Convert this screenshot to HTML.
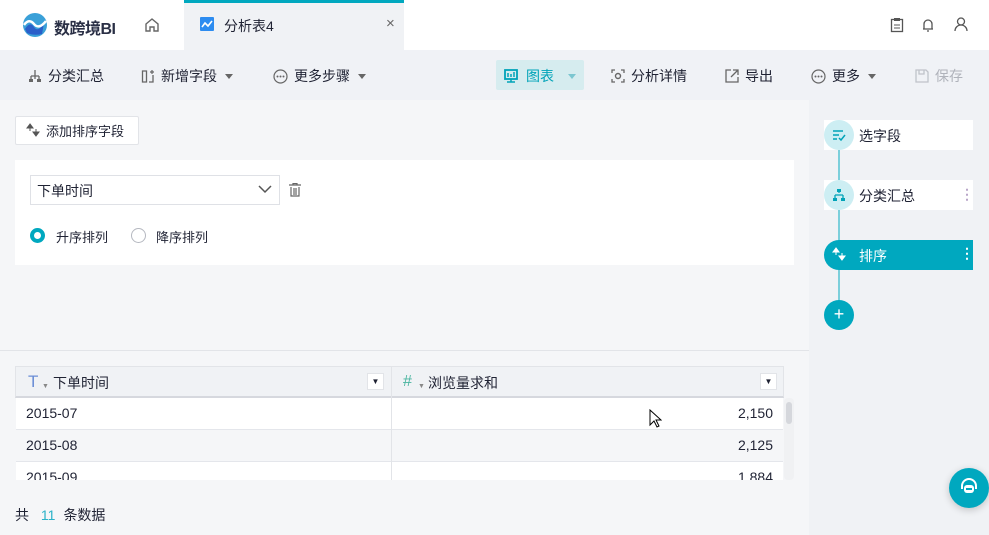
<!DOCTYPE html>
<html><head><meta charset="utf-8"><style>
*{box-sizing:border-box;margin:0;padding:0}
body{width:989px;height:535px;overflow:hidden;font-family:"Liberation Sans","Noto Sans CJK SC",sans-serif;font-size:14px;color:#1f2233;background:#f5f6f8;position:relative}
.abs{position:absolute}
.top{left:0;top:0;width:989px;height:50px;background:#fff}
.tab{left:184px;top:0;width:220px;height:50px;background:#f0f2f5;border-top:3px solid #00a8bf}
.tb{left:0;top:50px;width:989px;height:50px;background:#f0f2f6}
.ti{position:absolute;top:66px;display:flex;align-items:center;gap:6px;font-size:14px}
.car{width:0;height:0;border-left:4px solid transparent;border-right:4px solid transparent;border-top:5px solid #666;margin-left:2px}
.right{left:809px;top:100px;width:180px;height:435px;background:#f0f2f5}
.row{position:absolute;left:16px;width:767px;height:32px;border-bottom:1px solid #e4e6eb;background:#fff;font-size:14px}
.row span{position:absolute;top:7px}
</style></head><body>
<div class="abs top"></div>
<svg class="abs" style="left:22px;top:12px" width="26" height="26" viewBox="0 0 26 26"><circle cx="13" cy="13" r="12" fill="#3aa0d8"/><path d="M3 17 Q8 9 12 15 T22 11 L20 22 Q12 24 5 21Z" fill="#2a5fc9"/><path d="M2 13 Q7 6 12 12 T24 9" stroke="#fff" stroke-width="2.5" fill="none"/></svg>
<div class="abs" style="left:54px;top:15px;font-size:16px;font-weight:bold;color:#2a2f45;letter-spacing:-0.5px">数跨境BI</div>
<svg class="abs" style="left:144px;top:17px" width="16" height="16" viewBox="0 0 16 16"><path d="M2 7 L8 2 L14 7 V14 H10 V10 H6 V14 H2Z" fill="none" stroke="#666" stroke-width="1.4"/></svg>
<div class="abs tab"></div>
<svg class="abs" style="left:200px;top:17px" width="14" height="14"><rect width="14" height="14" fill="#2d8cf0" rx="1"/><path d="M2 10 L5 6 L8 9 L12 4" stroke="#fff" stroke-width="1.6" fill="none"/></svg>
<div class="abs" style="left:224px;top:16px;font-size:14px">分析表4</div>
<div class="abs" style="left:386px;top:15px;font-size:15px;color:#666">×</div>
<svg class="abs" style="left:890px;top:17px" width="14" height="16"><rect x="1.5" y="2.5" width="11" height="12" fill="none" stroke="#555" stroke-width="1.3"/><rect x="4" y="1" width="6" height="3" fill="#555"/><path d="M4 8h6M4 11h6" stroke="#555"/></svg>
<svg class="abs" style="left:921px;top:17px" width="14" height="16"><path d="M3 12 V7 a4 4 0 0 1 8 0 V12 H2 H12 M6 14 h2" fill="none" stroke="#555" stroke-width="1.3"/></svg>
<svg class="abs" style="left:953px;top:16px" width="16" height="16"><circle cx="8" cy="5.5" r="3.5" fill="none" stroke="#555" stroke-width="1.3"/><path d="M2 15 a6 6 0 0 1 12 0" fill="none" stroke="#555" stroke-width="1.3"/></svg>

<div class="abs tb"></div>
<div class="ti" style="left:28px"><svg width="14" height="14"><path d="M7 1v4M3 7h8M3 7v3M11 7v3M7 5v5" stroke="#666" stroke-width="1.3" fill="none"/><rect x="1" y="10" width="4" height="3" fill="#666"/><rect x="9" y="10" width="4" height="3" fill="#666"/></svg>分类汇总</div>
<div class="ti" style="left:141px"><svg width="14" height="14"><path d="M1.5 2v11h4V2zM8 13h4V6" stroke="#666" stroke-width="1.3" fill="none"/><path d="M11 1v4M9 3h4" stroke="#666" stroke-width="1.2"/></svg>新增字段<span class="car"></span></div>
<div class="ti" style="left:273px"><svg width="15" height="15"><circle cx="7.5" cy="7.5" r="6.5" fill="none" stroke="#666" stroke-width="1.2"/><circle cx="4.5" cy="7.5" r="1" fill="#666"/><circle cx="7.5" cy="7.5" r="1" fill="#666"/><circle cx="10.5" cy="7.5" r="1" fill="#666"/></svg>更多步骤<span class="car"></span></div>
<div class="abs" style="left:496px;top:60px;width:88px;height:30px;background:#d6ecef;border-radius:2px"></div>
<div class="ti" style="left:504px;color:#00a3b8;gap:8px"><svg width="14" height="14"><rect x="1" y="1" width="12" height="9" fill="none" stroke="#00a3b8" stroke-width="1.8"/><path d="M4 4v4M7 5v3M10 3v5M7 10v3M3 13h8" stroke="#00a3b8" stroke-width="1.5"/></svg>图表<span class="car" style="border-top-color:#7cc6d0;margin-left:6px"></span></div>
<div class="ti" style="left:611px"><svg width="14" height="14"><path d="M1 4V1h3M10 1h3v3M13 10v3h-3M4 13H1v-3" stroke="#666" stroke-width="1.3" fill="none"/><circle cx="7" cy="7" r="2.5" fill="none" stroke="#666" stroke-width="1.4"/></svg>分析详情</div>
<div class="ti" style="left:725px"><svg width="14" height="14"><path d="M6 1H1v12h12V8M8 1h5v5M13 1L6 8" stroke="#666" stroke-width="1.3" fill="none"/></svg>导出</div>
<div class="ti" style="left:811px"><svg width="15" height="15"><circle cx="7.5" cy="7.5" r="6.5" fill="none" stroke="#666" stroke-width="1.2"/><circle cx="4.5" cy="7.5" r="1" fill="#666"/><circle cx="7.5" cy="7.5" r="1" fill="#666"/><circle cx="10.5" cy="7.5" r="1" fill="#666"/></svg>更多<span class="car"></span></div>
<div class="ti" style="left:915px;color:#b0b3bb"><svg width="14" height="14"><path d="M1 1h10l2 2v10H1z M4 1v4h5V1" stroke="#c0c3ca" stroke-width="1.3" fill="none"/></svg>保存</div>

<div class="abs right"></div>
<div class="abs" style="left:838px;top:135px;width:2px;height:180px;background:#7ccfdb"></div>
<div class="abs" style="left:824px;top:120px;width:149px;height:30px;background:#fff"></div>
<div class="abs" style="left:824px;top:120px;width:30px;height:30px;border-radius:50%;background:#cdeef3"></div>
<svg class="abs" style="left:832px;top:128px" width="14" height="14"><path d="M1 3h10M1 7h6M1 11h4M7 10l2 2 4-5" stroke="#00a3b8" stroke-width="1.5" fill="none"/></svg>
<div class="abs" style="left:859px;top:126px">选字段</div>
<div class="abs" style="left:824px;top:180px;width:149px;height:30px;background:#fff"></div>
<div class="abs" style="left:824px;top:180px;width:30px;height:30px;border-radius:50%;background:#cdeef3"></div>
<svg class="abs" style="left:832px;top:188px" width="14" height="14"><path d="M7 1v4M3 7h8M3 7v3M11 7v3" stroke="#00a3b8" stroke-width="1.3" fill="none"/><rect x="5" y="1" width="4" height="3" fill="#00a3b8"/><rect x="1" y="10" width="4" height="3" fill="#00a3b8"/><rect x="9" y="10" width="4" height="3" fill="#00a3b8"/></svg>
<div class="abs" style="left:859px;top:186px">分类汇总</div>
<div class="abs" style="left:960px;top:186px;color:#b9a6c9;font-weight:bold">⋮</div>
<div class="abs" style="left:824px;top:240px;width:149px;height:30px;background:#00a8bf;border-radius:15px 0 0 15px"></div>
<svg class="abs" style="left:832px;top:247px" width="14" height="14"><path d="M4 1l-3 4h6zM4 5v3M10 13l3-4H7zM10 9V6" fill="#fff" stroke="#fff" stroke-width="1"/></svg>
<div class="abs" style="left:859px;top:246px;color:#fff">排序</div>
<div class="abs" style="left:960px;top:245px;color:#fff;font-weight:bold">⋮</div>
<div class="abs" style="left:824px;top:300px;width:30px;height:30px;border-radius:50%;background:#00a8bf;color:#fff;text-align:center;line-height:29px;font-size:18px">+</div>

<div class="abs" style="left:15px;top:116px;width:124px;height:29px;background:#fff;border:1px solid #e2e4e8;border-radius:2px"></div>
<svg class="abs" style="left:26px;top:123px" width="14" height="14"><path d="M4 1l-3 4h6zM4 5v3M10 13l3-4H7zM10 9V6" fill="#555" stroke="#555" stroke-width="1"/></svg>
<div class="abs" style="left:46px;top:121px;font-size:13px">添加排序字段</div>
<div class="abs" style="left:15px;top:160px;width:779px;height:105px;background:#fff"></div>
<div class="abs" style="left:30px;top:175px;width:250px;height:30px;border:1px solid #dfe1e6;background:#fff"></div>
<div class="abs" style="left:37px;top:181px">下单时间</div>
<svg class="abs" style="left:258px;top:185px" width="14" height="9"><path d="M1 1l6 6 6-6" stroke="#555" stroke-width="1.5" fill="none"/></svg>
<svg class="abs" style="left:289px;top:183px" width="12" height="14"><path d="M0 2h12M4 2V0.5h4V2M2 4v9h8V4M5 5v7M7 5v7" stroke="#666" stroke-width="1.2" fill="none"/></svg>
<div class="abs" style="left:30px;top:228px;width:15px;height:15px;border-radius:50%;border:4.5px solid #00a8bf"></div>
<div class="abs" style="left:56px;top:227px;font-size:13px">升序排列</div>
<div class="abs" style="left:131px;top:228px;width:15px;height:15px;border-radius:50%;border:1px solid #b5b8c0"></div>
<div class="abs" style="left:156px;top:227px;font-size:13px">降序排列</div>

<div class="abs" style="left:0;top:350px;width:809px;height:1px;background:#e2e4e8"></div>
<div class="abs" style="left:15px;top:366px;width:769px;height:32px;background:#f0f2f5;border:1px solid #e2e4e8;border-bottom:2px solid #d6d8de"></div>
<div class="abs" style="left:391px;top:366px;width:1px;height:114px;background:#e2e4e8;z-index:2"></div>
<div class="abs" style="left:28px;top:373px;color:#6b8ed6;font-size:17px;line-height:17px">T</div>
<div class="abs" style="left:42px;top:383px;font-size:7px;color:#888">▼</div>
<div class="abs" style="left:53px;top:373px">下单时间</div>
<div class="abs" style="left:367px;top:373px;width:17px;height:17px;background:#fff;border:1px solid #e2e4e8;font-size:8px;text-align:center;line-height:15px">▼</div>
<div class="abs" style="left:403px;top:373px;color:#4ab5a0;font-size:16px;line-height:17px">#</div>
<div class="abs" style="left:418px;top:383px;font-size:7px;color:#888">▼</div>
<div class="abs" style="left:428px;top:373px">浏览量求和</div>
<div class="abs" style="left:760px;top:373px;width:17px;height:17px;background:#fff;border:1px solid #e2e4e8;font-size:8px;text-align:center;line-height:15px">▼</div>
<div style="position:absolute;left:0;top:0;width:989px;height:480px;overflow:hidden">
<div class="row" style="top:398px"><span style="left:10px">2015-07</span><span style="right:10px">2,150</span></div>
<div class="row" style="top:430px;background:#f5f6f8"><span style="left:10px">2015-08</span><span style="right:10px">2,125</span></div>
<div class="row" style="top:462px"><span style="left:10px">2015-09</span><span style="right:10px">1,884</span></div>
</div>
<div class="abs" style="left:784px;top:398px;width:10px;height:82px;background:#f0f1f3;border-radius:4px"></div>
<div class="abs" style="left:786px;top:402px;width:6px;height:22px;background:#d5d7dc;border-radius:3px"></div>
<svg class="abs" style="left:649px;top:409px" width="13" height="20"><path d="M1 1v15l4-4 3 6 2-1-3-6h5z" fill="#fff" stroke="#000" stroke-width="1"/></svg>
<div class="abs" style="left:15px;top:505px;font-size:14px">共 <span style="color:#2bb2c8;margin:0 8px">11</span>条数据</div>
<div class="abs" style="left:949px;top:468px;width:40px;height:40px;border-radius:50%;background:#00a8bf;box-shadow:0 2px 8px rgba(0,0,0,.2)"></div>
<svg class="abs" style="left:958px;top:477px" width="22" height="22"><path d="M4 12V9a7 7 0 0 1 14 0v3" stroke="#fff" stroke-width="2" fill="none"/><rect x="6" y="8" width="10" height="8" rx="3" fill="#fff"/><rect x="8" y="11" width="6" height="2" fill="#00a8bf"/></svg>
</body></html>
